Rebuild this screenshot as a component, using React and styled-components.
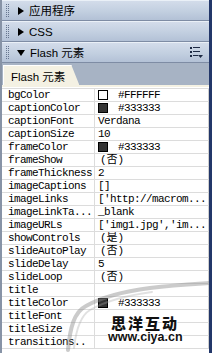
import React from "react";
import styled, { createGlobalStyle } from "styled-components";

const GlobalStyle = createGlobalStyle`
  html, body {
    margin: 0;
    padding: 0;
    background: #ffffff;
  }
  body {
    width: 212px;
    height: 353px;
    overflow: hidden;
  }
`;

const props = [
  { name: "bgColor", swatch: "#FFFFFF", value: "#FFFFFF" },
  { name: "captionColor", swatch: "#333333", value: "#333333" },
  { name: "captionFont", value: "Verdana" },
  { name: "captionSize", value: "10" },
  { name: "frameColor", swatch: "#333333", value: "#333333" },
  { name: "frameShow", value: "(否)", cjk: true },
  { name: "frameThickness", value: "2" },
  { name: "imageCaptions", value: "[]" },
  { name: "imageLinks", value: "['http://macrom..." },
  { name: "imageLinkTa...", value: "_blank" },
  { name: "imageURLs", value: "['img1.jpg','im..." },
  { name: "showControls", value: "(是)", cjk: true },
  { name: "slideAutoPlay", value: "(否)", cjk: true },
  { name: "slideDelay", value: "5" },
  { name: "slideLoop", value: "(否)", cjk: true },
  { name: "title", value: "" },
  { name: "titleColor", swatch: "#333333", value: "#333333" },
  { name: "titleFont", value: "" },
  { name: "titleSize", value: "" },
  { name: "transitions..", value: "" },
];

function ListIcon() {
  return (
    <svg width="14" height="12" viewBox="0 0 14 12">
      <g fill="#1d2a44">
        <rect x="0" y="0" width="2" height="2" />
        <rect x="3" y="0" width="7" height="1" />
        <rect x="0" y="4" width="2" height="2" />
        <rect x="3" y="4" width="7" height="1" />
        <rect x="0" y="8" width="2" height="2" />
        <rect x="3" y="8" width="5" height="1" />
        <path d="M8 8 L13 8 L10.5 11 Z" />
      </g>
    </svg>
  );
}

function Section({ title, open, menu }) {
  return (
    <Header>
      <Grip />
      <Arrow $open={open} />
      <HeaderTitle>{title}</HeaderTitle>
      {menu && (
        <MenuButton>
          <ListIcon />
        </MenuButton>
      )}
    </Header>
  );
}

export default function App() {
  return (
    <>
      <GlobalStyle />
      <Panel>
        <Section title="应用程序" />
        <Section title="CSS" />
        <Section title="Flash 元素" open menu />
        <TabStrip>
          <Tab>Flash 元素</Tab>
        </TabStrip>
        <PropGrid>
          {props.map((p) => (
            <React.Fragment key={p.name}>
              <NameCell>{p.name}</NameCell>
              <ValueCell $cjk={p.cjk}>
                {p.swatch && <Swatch $color={p.swatch} />}
                {p.value}
              </ValueCell>
            </React.Fragment>
          ))}
        </PropGrid>
        <Watermark>
          <Swoosh width="150" height="75" viewBox="0 0 150 75">
            <path
              d="M8 72 C 10 50, 14 34, 26 28 C 40 20, 60 14, 90 10 C 115 7, 135 6, 150 5"
              fill="none"
              stroke="rgba(140,140,140,0.45)"
              strokeWidth="4"
              strokeLinecap="round"
            />
            <path
              d="M14 70 C 16 52, 20 38, 30 32 C 44 24, 62 18, 92 14"
              fill="none"
              stroke="rgba(170,170,170,0.35)"
              strokeWidth="2"
              strokeLinecap="round"
            />
          </Swoosh>
          <MarkTitle>思洋互动</MarkTitle>
          <MarkUrl>www.ciya.cn</MarkUrl>
        </Watermark>
      </Panel>
    </>
  );
}

const Panel = styled.div`
  position: relative;
  display: flex;
  flex-direction: column;
  width: 212px;
  height: 353px;
  box-sizing: border-box;
  border-left: 2px solid #8793a6;
  border-right: 3px solid #233769;
  background: #ffffff;
  overflow: hidden;
`;

const Header = styled.div`
  display: flex;
  align-items: center;
  height: 19px;
  padding: 0 4px 0 4px;
  border-top: 1px solid #eaf0f7;
  border-bottom: 1px solid #7e8ca4;
  background: linear-gradient(to bottom, #d3dcea 0%, #c2cfe0 55%, #b3c1d6 100%);
  font-family: "Liberation Sans", "Noto Sans CJK SC", sans-serif;
  font-size: 11px;
  color: #000000;
`;

const Grip = styled.span`
  width: 1px;
  height: 13px;
  border-left: 1px dotted #66758f;
  border-right: 1px dotted #66758f;
`;

const Arrow = styled.span`
  width: 0;
  height: 0;
  margin-left: ${(p) => (p.$open ? "8px" : "9px")};
  border-style: solid;
  border-color: transparent;
  ${(p) =>
    p.$open
      ? `border-width: 6px 4px 0 4px; border-top-color: #000;`
      : `border-width: 4px 0 4px 6px; border-left-color: #000;`}
`;

const HeaderTitle = styled.span`
  margin-left: 5px;
  font-size: 11.5px;
  line-height: 14px;
`;

const MenuButton = styled.span`
  display: flex;
  margin-left: auto;
  margin-right: 1px;
`;

const TabStrip = styled.div`
  display: flex;
  align-items: flex-end;
  height: 22px;
  padding-left: 1px;
  background: #a7b3c4;
  border-bottom: 2px solid #f4f1e3;
`;

const Tab = styled.div`
  display: flex;
  align-items: center;
  height: 20px;
  padding: 0 14px 0 7px;
  background: #f4f1e3;
  border-left: 1px solid #ffffff;
  border-top: 1px solid #ffffff;
  box-sizing: border-box;
  clip-path: polygon(0 0, calc(100% - 8px) 0, 100% 100%, 0 100%);
  font-family: "Liberation Sans", "Noto Sans CJK SC", sans-serif;
  font-size: 11.5px;
  color: #000000;
`;

const PropGrid = styled.div`
  display: grid;
  grid-template-columns: 93px 1fr;
  margin-top: 1px;
  border-top: 1px solid #dcdcdc;
  font-family: "Liberation Mono", "Noto Sans CJK SC", monospace;
  font-size: 11px;
  letter-spacing: -0.6px;
  color: #000000;
`;

const NameCell = styled.div`
  height: 12px;
  line-height: 12px;
  padding-left: 6px;
  border-bottom: 1px solid #dcdcdc;
  border-right: 1px solid #dcdcdc;
  white-space: nowrap;
  overflow: hidden;
`;

const ValueCell = styled.div`
  display: flex;
  align-items: center;
  height: 12px;
  line-height: 12px;
  padding-left: ${(p) => (p.$cjk ? "5px" : "3px")};
  border-bottom: 1px solid #dcdcdc;
  border-right: 1px solid #cfcfcf;
  white-space: nowrap;
  overflow: hidden;
  letter-spacing: ${(p) => (p.$cjk ? "0" : "-0.6px")};
`;

const Swatch = styled.span`
  flex: none;
  width: 8px;
  height: 8px;
  margin-right: 10px;
  border: 1px solid #000000;
  background: ${(p) => p.$color};
`;

const Watermark = styled.div`
  position: absolute;
  left: 0;
  top: 0;
  width: 100%;
  height: 100%;
  pointer-events: none;
`;

const Swoosh = styled.svg`
  position: absolute;
  left: 58px;
  top: 278px;
`;

const MarkTitle = styled.div`
  position: absolute;
  left: 109px;
  top: 315px;
  font-family: "Noto Sans CJK SC", sans-serif;
  font-weight: 900;
  font-size: 15px;
  line-height: 15px;
  letter-spacing: 2px;
  color: #111111;
  text-shadow: 1px 0 #fff, -1px 0 #fff, 0 1px #fff, 0 -1px #fff;
`;

const MarkUrl = styled.div`
  position: absolute;
  left: 106px;
  top: 331px;
  font-family: "Liberation Sans", sans-serif;
  font-weight: bold;
  font-size: 12.5px;
  line-height: 12px;
  color: #111111;
  text-shadow: 1px 0 #fff, -1px 0 #fff, 0 1px #fff, 0 -1px #fff;
`;
